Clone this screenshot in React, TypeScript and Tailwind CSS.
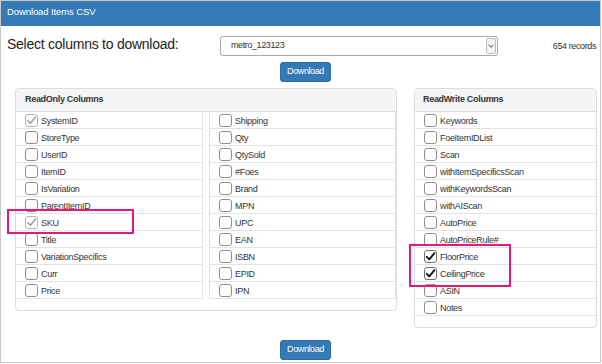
import React from "react";

const leftA = ["SystemID", "StoreType", "UserID", "ItemID", "IsVariation", "ParentItemID", "SKU", "Title", "VariationSpecifics", "Curr", "Price"];
const leftB = ["Shipping", "Qty", "QtySold", "#Foes", "Brand", "MPN", "UPC", "EAN", "ISBN", "EPID", "IPN"];
const rw = ["Keywords", "FoeItemIDList", "Scan", "withItemSpecificsScan", "withKeywordsScan", "withAIScan", "AutoPrice", "AutoPriceRule#", "FloorPrice", "CeilingPrice", "ASIN", "Notes"];

type State = "none" | "disabled" | "checked";

function Box({ state }: { state: State }) {
  const border = state === "disabled" ? "border-[#b5b5b5]" : state === "checked" ? "border-[#707070]" : "border-[#8f8f8f]";
  return (
    <span className={`w-[13px] h-[13px] rounded-[3px] border ${border} bg-white flex items-center justify-center shrink-0`}>
      {state !== "none" && (
        <svg width="11" height="11" viewBox="0 0 11 11">
          <path d="M1.8 5.8 L4.3 8.3 L9.4 2.2" fill="none" stroke={state === "checked" ? "#111" : "#a0a0a0"} strokeWidth={state === "checked" ? 1.9 : 1.6} strokeLinecap="round" strokeLinejoin="round" />
        </svg>
      )}
    </span>
  );
}

function Row({ label, state }: { label: string; state: State }) {
  return (
    <div className="h-[17px] border-b border-[#e3e3e3] flex items-center pl-[9px] gap-[3px]">
      <Box state={state} />
      <span className="text-[9px] tracking-[-0.3px] text-[#333] leading-none whitespace-nowrap pt-[2px]">{label}</span>
    </div>
  );
}

function stateFor(l: string): State {
  if (l === "SystemID" || l === "SKU") return "disabled";
  if (l === "FloorPrice" || l === "CeilingPrice") return "checked";
  return "none";
}

function Button() {
  return (
    <div className="ml-[279px] w-[51px] h-[20px] rounded-[3px] bg-[#337ab7] border border-[#2e6da4] text-white text-[9px] tracking-[-0.4px] flex items-center justify-center">
      Download
    </div>
  );
}

export default function App() {
  return (
    <div className="w-[602px] h-[364px] bg-white" style={{ fontFamily: '"Liberation Sans", Arial, sans-serif' }}>
      <div className="relative w-[601px] h-[363px] border border-[#c8c8c8] flex flex-col">
        <div className="h-[25px] bg-[#337ab7] text-white text-[9.5px] tracking-[-0.1px] flex items-center pl-[6px] pb-[3px] shrink-0">
          Download Items CSV
        </div>
        <div className="flex items-start mt-[10px] h-[20px]">
          <div className="w-[219px] pl-[6px] text-[14px] tracking-[-0.25px] text-[#222] leading-none mt-[1px] whitespace-nowrap">
            Select columns to download:
          </div>
          <div className="w-[278px] h-[20px] border border-[#a9a9a9] rounded-[3px] flex items-center pl-[10px] pr-[1px] bg-white">
            <span className="flex-1 text-[9px] tracking-[-0.4px] text-[#333]">metro_123123</span>
            <span className="w-[10px] h-[16px] border border-[#bdbdbd] rounded-[2px] bg-[#f3f3f3] flex items-center justify-center">
              <svg width="6" height="4" viewBox="0 0 6 4">
                <path d="M0.5 0.8 L3 3.2 L5.5 0.8" fill="none" stroke="#444" strokeWidth="1" />
              </svg>
            </span>
          </div>
          <div className="flex-1 text-right pr-[4px] text-[9px] tracking-[-0.4px] text-[#333] mt-[4px]">654 records</div>
        </div>
        <div className="mt-[6px]">
          <Button />
        </div>
        <div className="flex items-start mt-[6px] ml-[14px] gap-[17px]">
          <div className="w-[382px] border border-[#dcdcdc] rounded-[4px] pb-[11px] overflow-hidden">
            <div className="h-[23px] bg-[#f5f5f5] border-b border-[#dcdcdc] flex items-center pl-[9px] text-[9px] font-bold tracking-[-0.3px] text-[#333]">
              ReadOnly Columns
            </div>
            <div className="flex gap-[6px]">
              <div className="w-[187px] border-r border-[#e3e3e3]">
                {leftA.map((l) => (
                  <Row key={l} label={l} state={stateFor(l)} />
                ))}
              </div>
              <div className="w-[187px] border-l border-r border-[#e3e3e3]">
                {leftB.map((l) => (
                  <Row key={l} label={l} state={stateFor(l)} />
                ))}
              </div>
            </div>
          </div>
          <div className="w-[183px] border border-[#dcdcdc] rounded-[4px] pb-[11px] overflow-hidden">
            <div className="h-[23px] bg-[#f5f5f5] border-b border-[#dcdcdc] flex items-center pl-[8px] text-[9px] font-bold tracking-[-0.3px] text-[#333]">
              ReadWrite Columns
            </div>
            <div>
              {rw.map((l) => (
                <Row key={l} label={l} state={stateFor(l)} />
              ))}
            </div>
          </div>
        </div>
        <div className="mt-[12px]">
          <Button />
        </div>
        <div className="absolute left-[6px] top-[208px] w-[127px] h-[25px] border-2 border-[#e8177a]" />
        <div className="absolute left-[408px] top-[243px] w-[102px] h-[43px] border-2 border-[#e8177a]" />
      </div>
    </div>
  );
}
